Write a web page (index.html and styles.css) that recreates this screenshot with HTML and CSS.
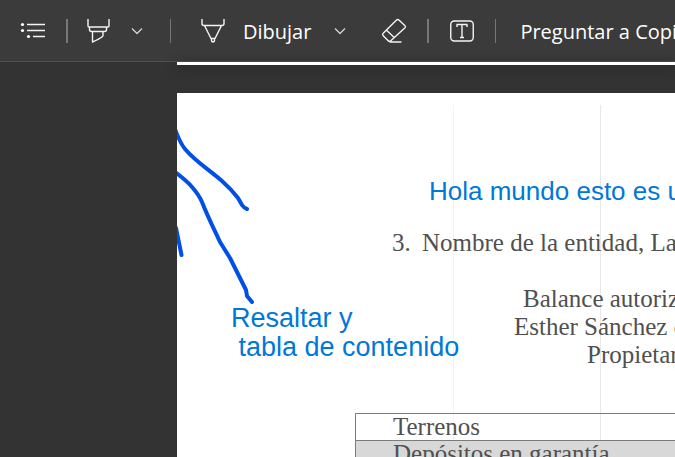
FILE: index.html
```html
<!DOCTYPE html>
<html lang="es">
<head>
<meta charset="utf-8">
<meta name="viewport" content="width=device-width, initial-scale=1">
<title>Visor de PDF</title>
<link rel="stylesheet" href="styles.css">
</head>
<body>
<header class="toolbar">
  <div class="group group-contents">
    <button class="tool" type="button" aria-label="Tabla de contenido">
      <svg class="icon" viewBox="0 0 24 24"><g class="dots"><circle cx="1.5" cy="5.5" r="1.6"/><circle cx="1.5" cy="11.5" r="1.6"/><circle cx="7.5" cy="17.5" r="1.6"/></g><path d="M6 5.5h18M6 11.5h18M12 17.5h12"/></svg>
    </button>
  </div>
  <span class="divider wide"></span>
  <div class="group group-highlight">
    <button class="tool" type="button" aria-label="Resaltar">
      <svg class="icon" viewBox="0 0 24 24"><path d="M2 0v7q0 1 1 1h19q1 0 1-1V0M3.500 8v2.500q0 2 2 2h13q2 0 2-2V8M6.500 12.500v10.500q7-3 10-5.500.5-.5.500-1.500v-3.500"/></svg>
    </button>
    <button class="tool" type="button" aria-label="Opciones de resaltado">
      <svg class="chevron" viewBox="0 0 14 8"><path d="M2 1.500l5 5 5-5"/></svg>
    </button>
  </div>
  <span class="divider"></span>
  <div class="group group-draw">
    <button class="tool labelled" type="button">
      <svg class="icon" viewBox="0 0 24 24"><path d="M2 0v4.500q0 2 2 2h18q2 0 2-2V0M4.500 6.500l6.500 13h4l6.500-13M11.500 19.500v1.500q0 2 1.500 2t1.500-2v-1.500"/></svg>
      <span class="label">Dibujar</span>
    </button>
    <button class="tool" type="button" aria-label="Opciones de dibujo">
      <svg class="chevron" viewBox="0 0 14 8"><path d="M2 1.500l5 5 5-5"/></svg>
    </button>
  </div>
  <div class="group group-erase">
    <button class="tool" type="button" aria-label="Borrar">
      <svg class="icon" viewBox="0 0 24 24"><path d="M14.300 1.200L1.200 14.300q-1.200 1.200 0 2.400l5 5q1.300 1.300 2.600 0L23 8.800q1-1 0-2l-5.800-5.600q-1.400-1.400-2.900 0zM4.500 11.200l8 7.500M7.500 23h12"/></svg>
    </button>
  </div>
  <span class="divider wide"></span>
  <div class="group group-text">
    <button class="tool" type="button" aria-label="Agregar texto">
      <svg class="icon" viewBox="0 0 24 24"><rect x="0.750" y="2" width="22.500" height="20" rx="3.500"/><path d="M7 8V5.500h10V8M12 5.500v13M10 18.500h4"/></svg>
    </button>
  </div>
  <span class="divider"></span>
  <div class="group group-ask">
    <button class="tool" type="button"><span class="label">Preguntar a Copilot</span></button>
  </div>
</header>
<main class="viewer">
  <div class="page-end"></div>
  <article class="page">
    <svg class="ink" viewBox="0 0 80 220" aria-hidden="true"><path d="M-2 36Q3 50 8 56C18 68 31 76 45 88Q54 96 61 105L65 112Q67 115 70 116"/><path d="M-2 79Q10 88 15 94 22 102 25 109C30 122 36 134 43 149L53 165 69 197 70 203 75 209"/><path d="M-1 135L4.500 162"/></svg>
    <p class="note note-top">Hola mundo esto es un</p>
    <p class="note note-side">Resaltar y<br>&nbsp;tabla de contenido</p>
    <p class="item"><span class="number">3.</span>Nombre de la entidad, La</p>
    <div class="credits">
      <p class="credit-second">Balance autoriza</p>
      <p class="credit-first">Esther Sánchez de</p>
      <p class="credit-third">Propietaria</p>
    </div>
    <table class="accounts">
      <tr><td>Terrenos</td></tr>
      <tr class="shaded"><td>Depósitos en garantía</td></tr>
    </table>
  </article>
</main>
</body>
</html>
```

FILE: styles.css
```css
* {
  box-sizing: border-box;
}

body {
  display: flex;
  flex-direction: column;
  height: 100vh;
  margin: 0;
  overflow: hidden;
  background: #333333;
}

.toolbar {
  display: flex;
  flex: none;
  align-items: center;
  height: 62px;
  overflow: hidden;
  border-bottom: 1px solid #515151;
  background: #3b3b3b;
}

.group {
  display: flex;
  flex: none;
  align-items: center;
}

.group-contents { padding: 0 21px; }
.group-highlight { gap: 20px; padding: 0 26px 0 18px; }
.group-draw { gap: 22px; padding: 0 35px 0 29px; }
.group-erase { padding-right: 21px; }
.group-text { padding: 0 21px; }
.group-ask { padding-left: 24px; }

.divider {
  flex: none;
  width: 1px;
  height: 24px;
  background: #777777;
}

.divider.wide {
  width: 2px;
}

.tool {
  display: flex;
  align-items: center;
  padding: 0;
  border: 0;
  background: none;
  color: #ffffff;
  font: 20px/28px "Open Sans", "Noto Sans", sans-serif;
  white-space: nowrap;
}

.labelled {
  gap: 19px;
}

.label {
  padding-top: 2px;
}

.icon,
.chevron {
  flex: none;
  overflow: visible;
  fill: none;
  stroke: #f4f4f4;
  stroke-width: 1.4;
  stroke-linejoin: round;
}

.icon {
  width: 24px;
  height: 24px;
}

.chevron {
  width: 14px;
  height: 8px;
  stroke: #d8d8d8;
  stroke-width: 1.2;
}

.dots {
  fill: #ffffff;
  stroke: none;
}

.viewer {
  display: flex;
  flex: 1;
  flex-direction: column;
  gap: 28px;
  min-height: 0;
  padding-left: 177px;
}

.page-end {
  flex: none;
  height: 3px;
  background: #ffffff;
  box-shadow: 0 2px 12px #1c1c1c;
}

.page {
  position: relative;
  flex: 1;
  min-height: 0;
  padding-top: 136px;
  overflow: hidden;
  background:
    linear-gradient(#f3f3f3, #f3f3f3) 276px 12px / 1px 100% no-repeat,
    linear-gradient(#e8e8e8, #e8e8e8) 423px 12px / 1px 100% no-repeat,
    #ffffff;
  color: #505050;
  font: 25px/28px "Palatino Linotype", Palatino, "Liberation Serif", serif;
  white-space: nowrap;
}

.page p {
  margin: 0;
}

.ink {
  position: absolute;
  top: 0;
  left: 0;
  width: 80px;
  height: 220px;
  fill: none;
  stroke: #0050e6;
  stroke-width: 4;
  stroke-linecap: round;
  stroke-linejoin: round;
}

.page .note {
  position: absolute;
  color: #0078d7;
  font: 26px/29px "Liberation Sans", Arial, sans-serif;
}

.note-top {
  top: 84px;
  left: 252px;
}

.page .note-side {
  top: 211px;
  left: 54px;
  font-size: 27px;
}

.item {
  padding-left: 215px;
}

.number {
  display: inline-block;
  width: 30px;
}

.credits {
  padding: 28px 0 44px 337px;
}

.credit-second { text-indent: 9px; }
.credit-third { text-indent: 73px; }

.accounts {
  width: calc(100% - 178px);
  margin-left: 178px;
  border-collapse: collapse;
  border: 1px solid #7c7c7c;
  border-right: 0;
}

.accounts td {
  height: 27px;
  padding: 0 0 0 37px;
  line-height: 26px;
}

.shaded {
  border-top: 1px solid #7c7c7c;
  background: #d8d8d8;
}
```
